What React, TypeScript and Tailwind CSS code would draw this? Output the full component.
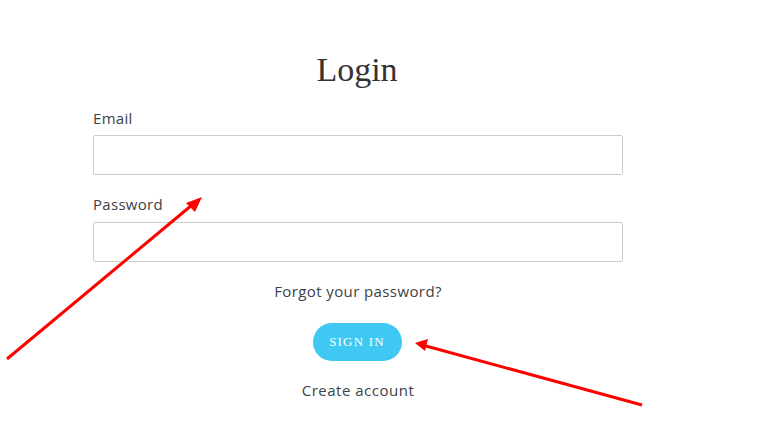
import React from "react";

export default function App() {
  return (
    <div className="relative w-[758px] h-[444px] bg-white overflow-hidden" style={{ fontFamily: '"Open Sans", "Liberation Sans", sans-serif' }}>
      <div className="pl-[93px] pt-[50px]">
        <div className="w-[530px] flex flex-col">
          <h1 className="text-center text-[34px] leading-[40px] text-[#333333] ml-[-2px]" style={{ fontFamily: '"Liberation Serif", serif' }}>
            Login
          </h1>
          <label className="mt-[18px] text-[15px] leading-[20px] text-[#3d4246] tracking-[0.3px]">Email</label>
          <div className="mt-[7px] h-[40px] border border-[#cccccc] rounded-[2px]" />
          <label className="mt-[19px] text-[15px] leading-[20px] text-[#3d4246] tracking-[0.3px]">Password</label>
          <div className="mt-[8px] h-[40px] border border-[#cccccc] rounded-[2px]" />
          <div className="mt-[19px] text-center text-[15px] leading-[20px] text-[#3d4246] tracking-[0.4px]">Forgot your password?</div>
          <div className="mt-[22px] flex justify-center">
            <div className="w-[89px] h-[38px] rounded-full bg-[#3ec8f2] text-white flex items-center justify-center text-[13px] tracking-[1.2px] ml-[-2px]" style={{ fontFamily: '"Liberation Serif", serif' }}>
              SIGN IN
            </div>
          </div>
          <div className="mt-[19px] text-center text-[15px] leading-[20px] text-[#3d4246] tracking-[0.5px]">Create account</div>
        </div>
      </div>
      <svg className="absolute left-0 top-0" width="758" height="444">
        <line x1="7" y1="359" x2="192" y2="205" stroke="#ff0000" strokeWidth="3" />
        <polygon points="202,197 186,203 195,212" fill="#ff0000" />
        <line x1="642" y1="405" x2="426" y2="346" stroke="#ff0000" strokeWidth="3" />
        <polygon points="415,343 428,339 425,351" fill="#ff0000" />
      </svg>
    </div>
  );
}
